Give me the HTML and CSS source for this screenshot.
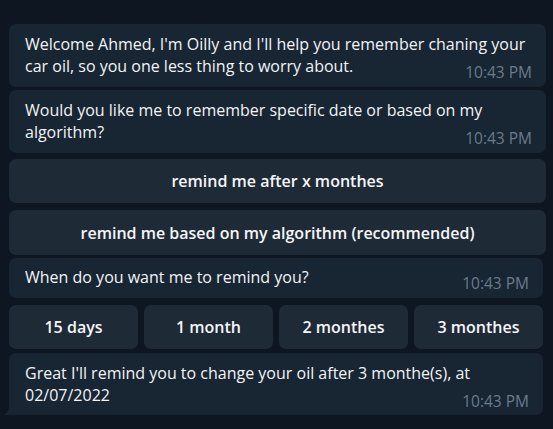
FILE: index.html
```html
<!DOCTYPE html>
<html>
<head>
<meta charset="utf-8">
<link rel="stylesheet" href="styles.css">
</head>
<body>
<div class="chat">
  <div class="msg wide first">Welcome Ahmed, I'm Oilly and I'll help you remember chaning your<br>car oil, so you one less thing to worry about.<span class="time">10:43 PM</span></div>
  <div class="msg wide gap3">Would you like me to remember specific date or based on my<br>algorithm?<span class="time">10:43 PM</span></div>
  <div class="btn wide gap6">remind me after x monthes</div>
  <div class="btn wide gap7 tall">remind me based on my algorithm (recommended)</div>
  <div class="msg narrow gap3 single">When do you want me to remind you?<span class="time">10:43 PM</span></div>
  <div class="row narrow gap7">
    <div class="btn">15 days</div>
    <div class="btn">1 month</div>
    <div class="btn">2 monthes</div>
    <div class="btn">3 monthes</div>
  </div>
  <div class="msg narrow gap4 last">Great I'll remind you to change your oil after 3 monthe(s), at<br>02/07/2022<span class="time">10:43 PM</span><svg class="tail" width="8" height="9" viewBox="0 0 8 9"><path d="M8 0 V9 H0 C3 8 6 6 6 0 Z" fill="#182533"/></svg></div>
</div>
</body>
</html>
```
FILE: styles.css
```css
html, body {
  margin: 0;
  padding: 0;
  background: #0e1621;
}
body {
  width: 553px;
  height: 429px;
  overflow: hidden;
  font-family: "Open Sans", "Noto Sans", sans-serif;
}
.chat {
  display: flex;
  flex-direction: column;
  padding: 24px 0 0 9px;
}
.wide { width: 537px; }
.narrow { width: 534px; }
.gap3 { margin-top: 3px; }
.gap4 { margin-top: 4px; }
.gap6 { margin-top: 6px; }
.gap7 { margin-top: 7px; }
.msg {
  box-sizing: border-box;
  background: #182533;
  border-radius: 7px;
  padding: 9px 14px 7px 16px;
  color: #f2f4f6;
  font-size: 16px;
  line-height: 22px;
  display: flow-root;
  white-space: nowrap;
  position: relative;
}
.msg.single { padding-top: 8px; }
.msg.last { border-bottom-left-radius: 0; padding-bottom: 6px; }
.time {
  float: right;
  margin: 9px 0 0 16px;
  line-height: 16px;
  font-size: 15.5px;
  color: #6a7b8c;
}
.tail {
  position: absolute;
  left: -6px;
  bottom: 0;
  display: block;
}
.btn {
  box-sizing: border-box;
  background: #1f2a37;
  border-radius: 7px;
  height: 44px;
  display: flex;
  align-items: center;
  justify-content: center;
  color: #f4f6f8;
  font-size: 16px;
  font-weight: 600;
}
.btn.tall { height: 45px; }
.row {
  display: grid;
  grid-template-columns: repeat(4, 1fr);
  gap: 6px;
}
```
